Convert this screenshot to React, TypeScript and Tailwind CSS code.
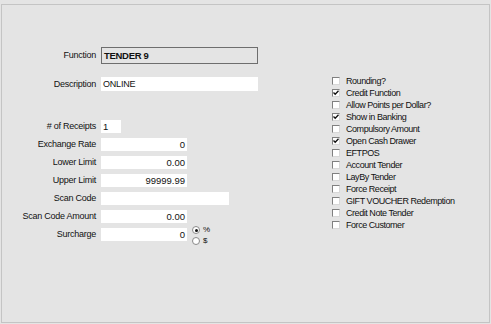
import React from "react";

const font = { fontFamily: '"Liberation Sans", Arial, sans-serif' };

function Label({ children }: { children: React.ReactNode }) {
  return (
    <div className="w-[94px] shrink-0 text-right text-[9px] leading-none tracking-[-0.25px] text-[#111]">
      {children}
    </div>
  );
}

function NumRow({ label, value, width = "w-[86px]", align = "text-right", extra }: { label: string; value: string; width?: string; align?: string; extra?: React.ReactNode }) {
  return (
    <div className="flex h-[13px] items-center gap-[5px]">
      <Label>{label}</Label>
      <div className={`${width} h-[13px] bg-white px-[2px] text-[9.5px] leading-[13px] text-[#111] ${align}`}>{value}</div>
      {extra}
    </div>
  );
}

function Check({ label, checked }: { label: string; checked?: boolean }) {
  return (
    <div className="flex h-[12px] items-center gap-[6px]">
      <div className="relative h-[8px] w-[8px] border border-t-[#808080] border-l-[#808080] border-r-[#d8d8d8] border-b-[#d8d8d8] bg-white">
        {checked && (
          <svg className="absolute left-[0px] top-[0px]" width="6" height="6" viewBox="0 0 6 6">
            <path d="M0.5 2.5 L2.2 4.3 L5.5 0.8" stroke="#111" strokeWidth="1.3" fill="none" />
          </svg>
        )}
      </div>
      <span className="text-[9px] leading-none tracking-[-0.45px] text-[#111]">{label}</span>
    </div>
  );
}

function Radio({ checked }: { checked?: boolean }) {
  return (
    <div className="flex h-[8px] w-[8px] items-center justify-center rounded-full border border-[#8a8a8a] bg-white">
      {checked && <div className="h-[3px] w-[3px] rounded-full bg-[#111]" />}
    </div>
  );
}

export default function App() {
  return (
    <div className="h-[324px] w-[491px] bg-[#e4e4e4] pl-[1px] pt-[4px]" style={font}>
      <div className="flex h-[319px] w-[489px] border border-[#c4c4c4]">
        <div className="flex w-[300px] flex-col pt-[42px]">
          <div className="flex h-[17px] items-center gap-[5px]">
            <Label>Function</Label>
            <div className="h-[17px] w-[157px] border border-[#6e6e6e] bg-[#e4e4e4] pl-[2px] text-[9.5px] font-bold leading-[15px] tracking-[-0.3px] text-[#111]">
              TENDER 9
            </div>
          </div>
          <div className="mt-[13px] flex h-[14px] items-center gap-[5px]">
            <Label>Description</Label>
            <div className="h-[14px] w-[157px] bg-white px-[2px] text-[9px] leading-[14px] tracking-[-0.2px] text-[#111]">ONLINE</div>
          </div>
          <div className="mt-[29px] flex flex-col gap-[5px]">
            <NumRow label="# of Receipts" value="1" width="w-[20px]" align="text-left" />
            <NumRow label="Exchange Rate" value="0" />
            <NumRow label="Lower Limit" value="0.00" />
            <NumRow label="Upper Limit" value="99999.99" />
            <NumRow label="Scan Code" value="" width="w-[128px]" />
            <NumRow label="Scan Code Amount" value="0.00" />
            <NumRow
              label="Surcharge"
              value="0"
              extra={
                <div className="ml-[0px] flex flex-col gap-[3px] pt-[2px]">
                  <div className="flex items-center gap-[3px]">
                    <Radio checked />
                    <span className="text-[8px] leading-none text-[#111]">%</span>
                  </div>
                  <div className="flex items-center gap-[3px]">
                    <Radio />
                    <span className="text-[8px] leading-none text-[#111]">$</span>
                  </div>
                </div>
              }
            />
          </div>
        </div>
        <div className="ml-[30px] flex flex-col pt-[70px]">
          <Check label="Rounding?" />
          <Check label="Credit Function" checked />
          <Check label="Allow Points per Dollar?" />
          <Check label="Show in Banking" checked />
          <Check label="Compulsory Amount" />
          <Check label="Open Cash Drawer" checked />
          <Check label="EFTPOS" />
          <Check label="Account Tender" />
          <Check label="LayBy Tender" />
          <Check label="Force Receipt" />
          <Check label="GIFT VOUCHER Redemption" />
          <Check label="Credit Note Tender" />
          <Check label="Force Customer" />
        </div>
      </div>
    </div>
  );
}
